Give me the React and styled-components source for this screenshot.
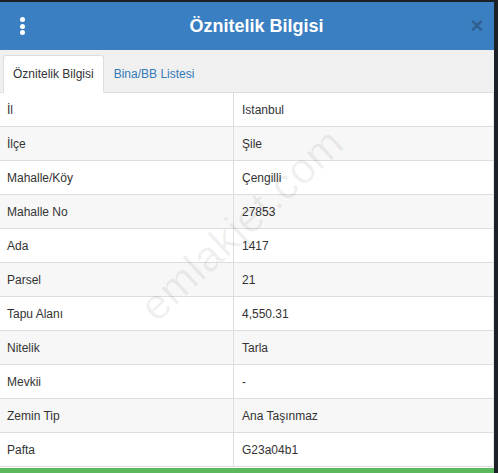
import React from "react";
import styled, { createGlobalStyle } from "styled-components";

const Global = createGlobalStyle`
  html, body {
    margin: 0;
    padding: 0;
    background: #1c2128;
    font-family: "Liberation Sans", Arial, sans-serif;
    overflow: hidden;
  }
`;

const Screen = styled.div`
  width: 498px;
  height: 473px;
  padding-top: 2px;
  box-sizing: border-box;
  overflow: hidden;
`;

const Modal = styled.div`
  position: relative;
  width: 494px;
  background: #fff;
  display: flex;
  flex-direction: column;
  overflow: hidden;
`;

const Header = styled.div`
  height: 48px;
  background: #3a7fc1;
  display: flex;
  align-items: center;
  justify-content: space-between;
  padding: 0 7px 0 18px;
  box-sizing: border-box;
`;

const Title = styled.h3`
  flex: 1;
  margin: 0;
  padding-left: 20px;
  text-align: center;
  color: #fff;
  font-size: 18px;
  font-weight: bold;
`;

const MenuDots = styled.span`
  display: flex;
  flex-direction: column;
  gap: 1.5px;
  width: 8px;
  align-items: center;
  span {
    width: 5px;
    height: 5px;
    border-radius: 50%;
    background: #fff;
  }
`;

const Close = styled.span`
  color: #2e5d8c;
  font-size: 22px;
  font-weight: bold;
  line-height: 1;
  opacity: 0.9;
  width: 20px;
  text-align: center;
`;

const TabBar = styled.div`
  background: #f0f0f0;
  height: 43px;
  display: flex;
  align-items: flex-end;
  padding-left: 3px;
  box-sizing: border-box;
  border-bottom: 1px solid #ddd;
`;

const Tab = styled.div`
  height: 38px;
  box-sizing: border-box;
  padding: 0 9px;
  margin-bottom: -1px;
  display: flex;
  align-items: center;
  font-size: 12px;
  color: ${(p) => (p.$active ? "#333" : "#337ab7")};
  background: ${(p) => (p.$active ? "#fff" : "transparent")};
  border: 1px solid ${(p) => (p.$active ? "#ddd" : "transparent")};
  border-bottom-color: ${(p) => (p.$active ? "#fff" : "transparent")};
  border-radius: 3px 3px 0 0;
`;

const Table = styled.div`
  display: grid;
  grid-template-columns: 233px 1fr;
`;

const Cell = styled.div`
  height: 34px;
  box-sizing: border-box;
  display: flex;
  align-items: center;
  padding-left: ${(p) => (p.$value ? "8px" : "7px")};
  font-size: 12px;
  color: #333;
  background: ${(p) => (p.$striped ? "#f7f7f7" : "#fff")};
  border-bottom: 1px solid #ddd;
  border-left: ${(p) => (p.$value ? "1px solid #ddd" : "none")};
  border-right: ${(p) => (p.$value ? "1px solid #e6e6e6" : "none")};
`;

const Footer = styled.div`
  height: 6px;
  margin-top: 1px;
  background: #5cb85c;
`;

const Watermark = styled.div`
  position: absolute;
  left: 112px;
  top: 198px;
  transform: rotate(-43deg);
  font-size: 43px;
  font-weight: 300;
  color: rgba(0, 0, 0, 0.06);
  pointer-events: none;
  letter-spacing: 0.5px;
  white-space: nowrap;
`;

const rows = [
  ["İl", "Istanbul"],
  ["İlçe", "Şile"],
  ["Mahalle/Köy", "Çengilli"],
  ["Mahalle No", "27853"],
  ["Ada", "1417"],
  ["Parsel", "21"],
  ["Tapu Alanı", "4,550.31"],
  ["Nitelik", "Tarla"],
  ["Mevkii", "-"],
  ["Zemin Tip", "Ana Taşınmaz"],
  ["Pafta", "G23a04b1"],
];

export default function App() {
  return (
    <Screen>
      <Global />
      <Modal>
        <Header>
          <MenuDots>
            <span />
            <span />
            <span />
          </MenuDots>
          <Title>Öznitelik Bilgisi</Title>
          <Close>×</Close>
        </Header>
        <TabBar>
          <Tab $active>Öznitelik Bilgisi</Tab>
          <Tab>Bina/BB Listesi</Tab>
        </TabBar>
        <Table>
          {rows.map(([k, v], i) => (
            <React.Fragment key={k}>
              <Cell $striped={i % 2 === 1}>{k}</Cell>
              <Cell $value $striped={i % 2 === 1}>
                {v}
              </Cell>
            </React.Fragment>
          ))}
        </Table>
        <Footer />
        <Watermark>emlakjet.com</Watermark>
      </Modal>
    </Screen>
  );
}
